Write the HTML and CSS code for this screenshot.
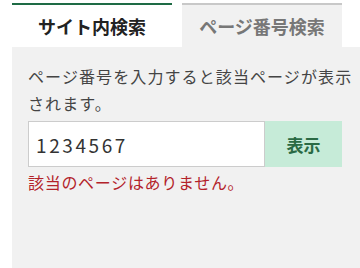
FILE: index.html
```html
<!DOCTYPE html>
<html lang="ja">

<head>
     <meta charset="UTF-8" />
     <title>ページ番号検索</title>
     <meta name="viewport" content="width=device-width, initial-scale=1" />
     <link rel="stylesheet" href="styles.css">
</head>

<body>
     <div class="search-box">
          <div class="tabs">
               <div class="tab">サイト内検索</div>
               <div class="tab active">ページ番号検索</div>
          </div>

          <div class="panel">
               <p class="note">ページ番号を入力すると該当ページが表示されます。</p>
               <div class="page-form">
                    <input type="text" class="page-input" value="1234567" />
                    <button class="page-btn">表示</button>
               </div>
               <p class="error">該当のページはありません。</p>
          </div>
     </div>
</body>

</html>
```

FILE: styles.css
```css
* {
     box-sizing: border-box;
     margin: 0;
     padding: 0;
}

body {
     font-family: "Noto Sans CJK JP", "Noto Sans", sans-serif;
     background: #fff;
     color: #333;
}

.search-box {
     padding: 3px 0 0 12px;
     height: 268px;
     display: flex;
     flex-direction: column;
}

.tabs {
     display: flex;
     gap: 10px;
}

.tab {
     width: 160px;
     height: 44px;
     display: flex;
     align-items: center;
     justify-content: center;
     font-size: 18px;
     font-weight: bold;
     color: #222;
     background: #fff;
     border-top: 2px solid #1e6b45;
}

.tab.active {
     background: #f1f1f1;
     color: #777;
     border-top-color: #c8c8c8;
}

.panel {
     flex: 1;
     background: #f1f1f1;
     padding: 16px 0 16px 16px;
}

.note,
.error {
     font-size: 16px;
     line-height: 27px;
}

.note {
     color: #444;
     letter-spacing: 1.1px;
}

.page-form {
     display: flex;
     width: 314px;
     height: 46px;
     margin-top: 4px;
}

.page-input {
     flex: 1;
     min-width: 0;
     border: 1px solid #ccc;
     background: #fff;
     padding: 0 7px;
     font-family: inherit;
     font-size: 19px;
     letter-spacing: 2.6px;
     color: #333;
}

.page-btn {
     width: 77px;
     border: none;
     background: #c6ebd8;
     color: #2a6a44;
     font-family: inherit;
     font-size: 17px;
     font-weight: bold;
}

.error {
     color: #b3232a;
     letter-spacing: 0.7px;
     margin-top: 2px;
}
```
